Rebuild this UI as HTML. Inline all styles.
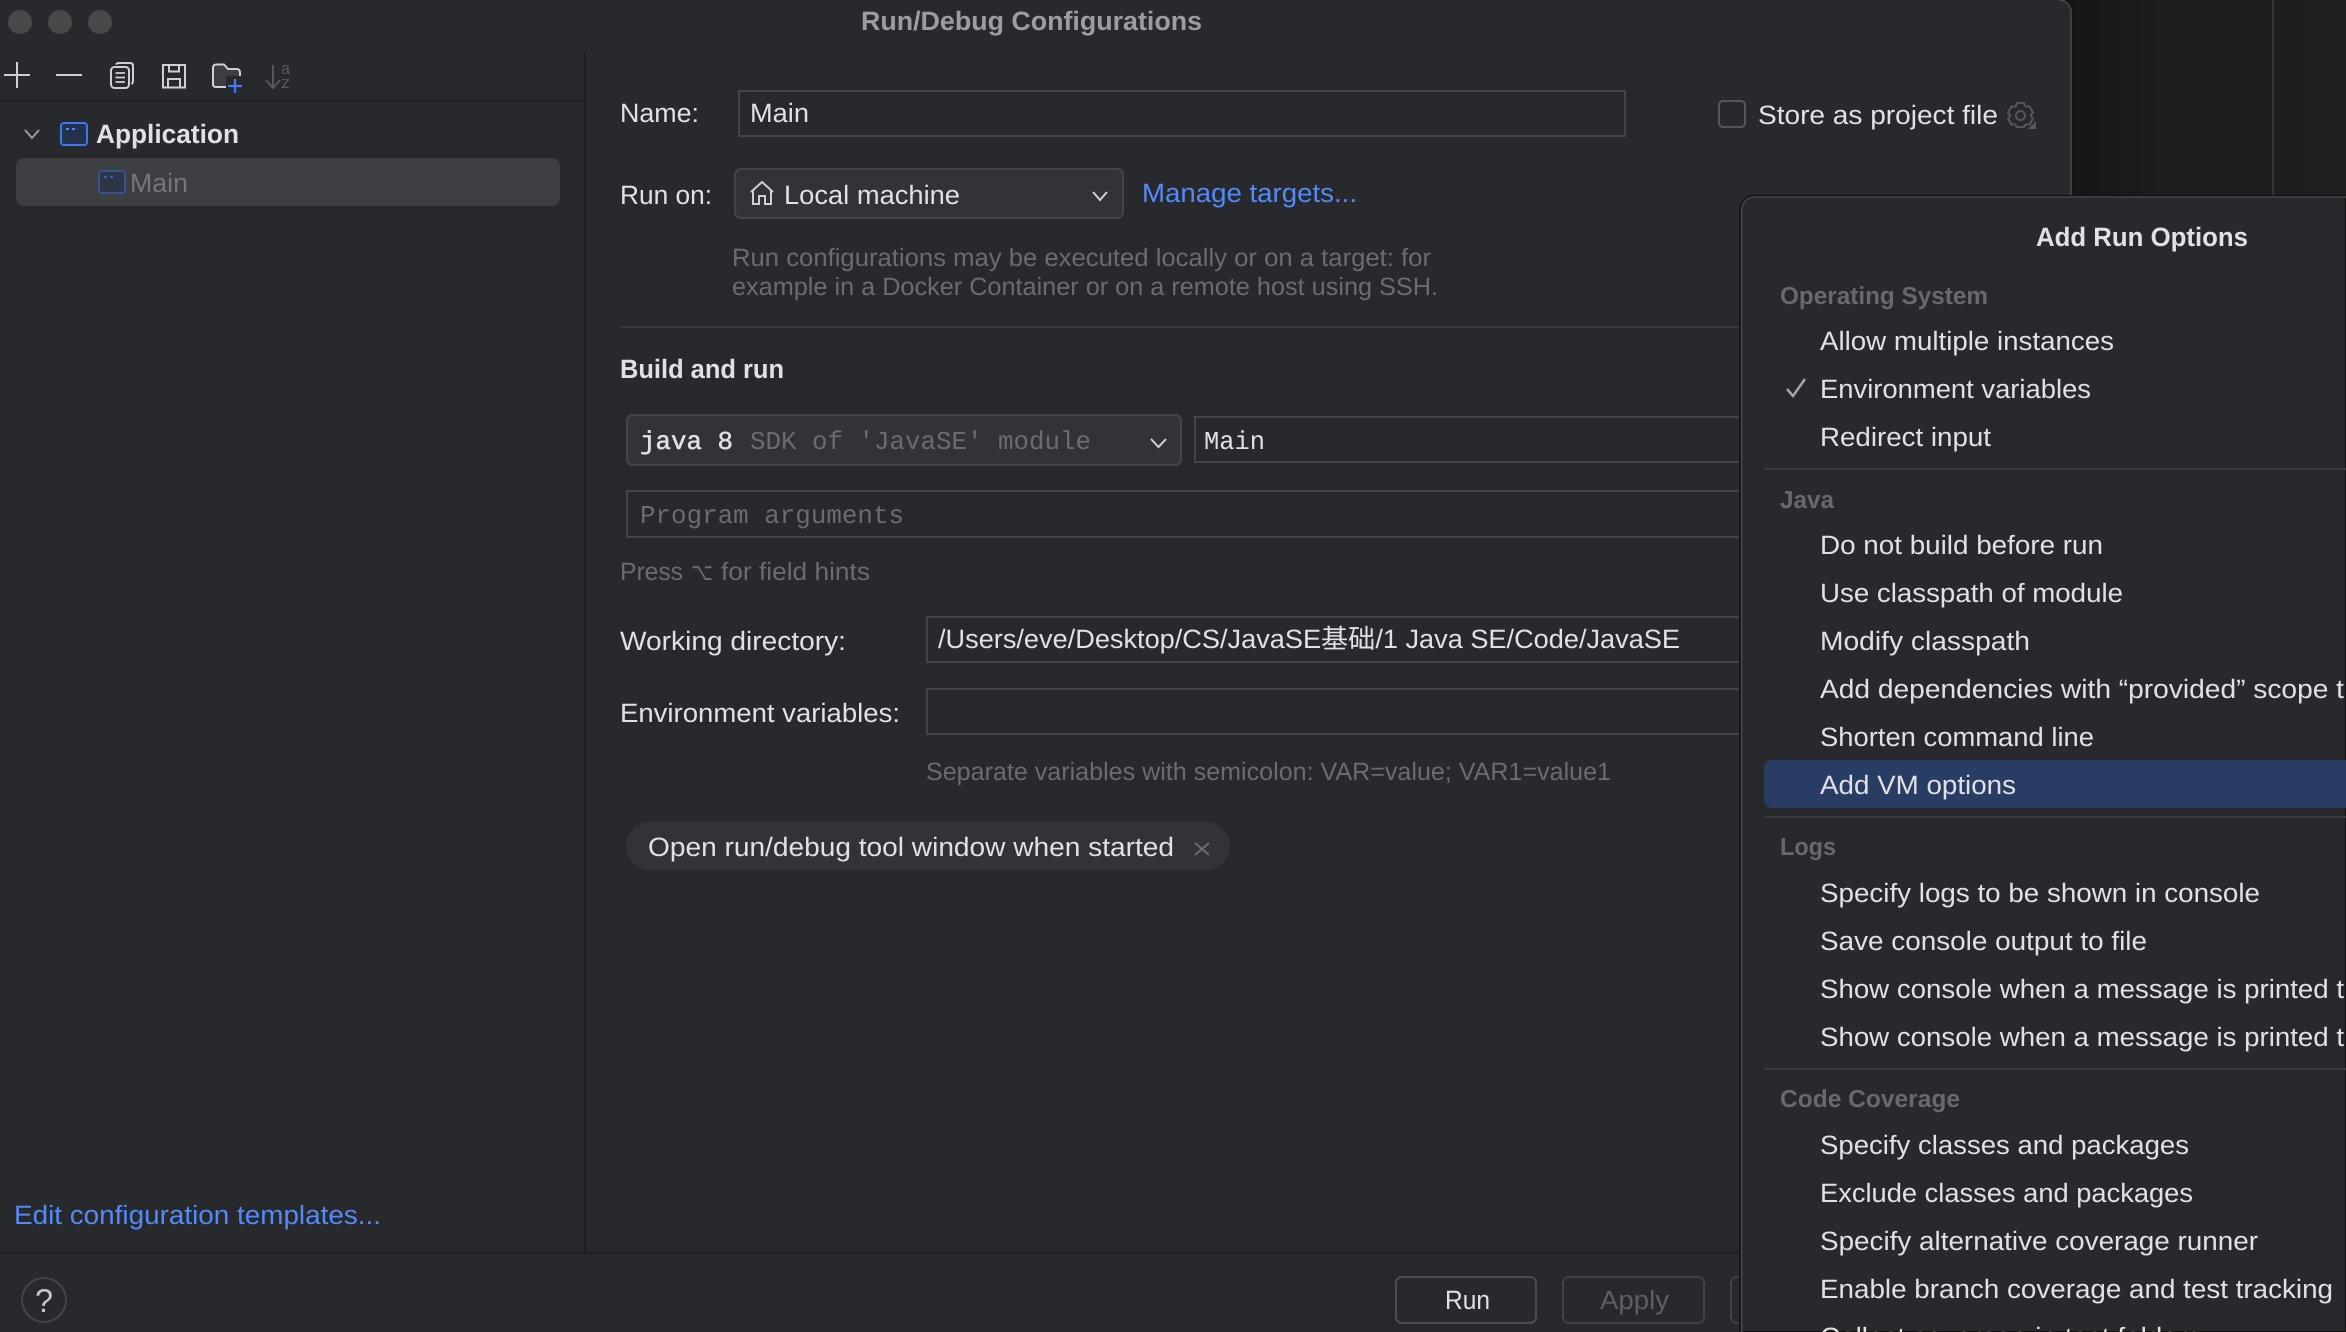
<!DOCTYPE html>
<html lang="en"><head><meta charset="utf-8"><title>Run/Debug Configurations</title>
<style>
html,body{margin:0;padding:0;background:#1d1e20;width:2346px;height:1332px;overflow:hidden}
svg{display:block}
text{font-family:"Liberation Sans","Noto Sans CJK SC",sans-serif;font-size:26.5px;fill:#dfe1e5;text-rendering:geometricPrecision;white-space:pre}
.b{font-weight:700}
.h{fill:#696c73;font-size:25px}
.g{fill:#67696f;font-weight:700;font-size:24.5px}
.m{font-family:"Liberation Mono",monospace;font-size:25.8px}
.l{fill:#548af7}
.i{stroke:#ced0d6;stroke-width:2;fill:none}
</style></head><body>
<svg width="2346" height="1332" viewBox="0 0 2346 1332" xmlns="http://www.w3.org/2000/svg">
<defs>
<linearGradient id="s" x1="0" x2="1" y1="0" y2="0"><stop offset="0" stop-color="#131416"/><stop offset=".35" stop-color="#1c1d1f"/><stop offset="1" stop-color="#1e1f21"/></linearGradient>
<clipPath id="pc"><path d="M1741 1332V210a14 14 0 0 1 14-14H2346V1332Z"/></clipPath>
</defs>
<rect x="2060" width="286" height="1332" fill="url(#s)"/>
<rect x="2272" width="2" height="196" fill="#333436"/>
<!-- dialog -->
<path d="M0 0H2059a12 12 0 0 1 12 12V1332H0Z" fill="#28292c"/>
<path d="M2059 0a12 12 0 0 1 12 12V196" fill="none" stroke="#4a4b4e" stroke-width="1.500"/>
<circle cx="20" cy="22" r="12" fill="#47484a"/><circle cx="60" cy="22" r="12" fill="#47484a"/><circle cx="100" cy="22" r="12" fill="#47484a"/>
<text x="861" y="30" class="b" style="fill:#9c9da0" textLength="341" lengthAdjust="spacingAndGlyphs">Run/Debug Configurations</text>

<!-- sidebar dividers -->
<rect x="584" y="52" width="2" height="1200" fill="#1f2022"/>
<rect x="0" y="100" width="584" height="2" fill="#1f2022"/>
<rect x="0" y="1252" width="1741" height="2" fill="#1f2022"/>

<!-- toolbar icons -->
<path class="i" d="M4 75H30M17 62V88"/>
<path class="i" d="M56 75H82"/>
<g class="i"><rect x="111" y="67" width="18" height="21" rx="3.500"/><path d="M116 64.500q1-1.500 3-1.500h11q3 0 3 3v15q0 2-1.500 3"/><path d="M115.500 73H125M115.500 77.500H125M115.500 82H125" stroke-width="1.800"/></g>
<g class="i"><path d="M163 65H185V87.500H163Z"/><path d="M169 65V71.500H179V65M168 87.500V79H180V87.500"/></g>
<path d="M213 84V68q0-3.500 3.500-3.500H224l4 4.500h8.500q3.500 0 3.500 3.500V84q0 3-3 3H216q-3 0-3-3Z" fill="#3c3e42" stroke="#ced0d6" stroke-width="2"/>
<rect x="226" y="76" width="18" height="18" fill="#28292c"/>
<path d="M235 79V93M228 86H242" stroke="#3c7cf2" stroke-width="2.200" fill="none"/>
<path d="M273 65V87M266 80L273 88L280 80" stroke="#55575c" stroke-width="2" fill="none"/>
<text x="281" y="74" style="fill:#55575c;font-size:17px" textLength="9" lengthAdjust="spacingAndGlyphs">a</text>
<text x="281" y="88" style="fill:#55575c;font-size:17px" textLength="9" lengthAdjust="spacingAndGlyphs">z</text>

<!-- tree -->
<path d="M25 130L32 138L39 130" stroke="#9a9ca2" stroke-width="2" fill="none"/>
<rect x="61" y="123" width="26" height="22" rx="3" fill="#25324d" stroke="#3f78ea" stroke-width="2"/>
<path d="M66 129H69M72 129H75" stroke="#548af7" stroke-width="2"/>
<text x="96" y="143" class="b" textLength="143" lengthAdjust="spacingAndGlyphs">Application</text>
<rect x="16" y="158" width="544" height="48" rx="8" fill="#3c3e42"/>
<rect x="99" y="171" width="26" height="22" rx="3" fill="#2c3445" stroke="#35538f" stroke-width="2"/>
<path d="M104 177H107M110 177H113" stroke="#3e5f9f" stroke-width="2"/>
<text x="130" y="192" style="fill:#74767b" textLength="58" lengthAdjust="spacingAndGlyphs">Main</text>

<text x="14" y="1224" class="l" textLength="367" lengthAdjust="spacingAndGlyphs">Edit configuration templates...</text>
<circle cx="44" cy="1300" r="22" fill="none" stroke="#43454a" stroke-width="2"/>
<text x="35" y="1312" style="font-size:33px;fill:#c4c6cb" textLength="18" lengthAdjust="spacingAndGlyphs">?</text>

<!-- form top -->
<text x="620" y="122" textLength="79" lengthAdjust="spacingAndGlyphs">Name:</text>
<rect x="739" y="91" width="886" height="45" fill="none" stroke="#43454a" stroke-width="2"/>
<text x="750" y="122" textLength="59" lengthAdjust="spacingAndGlyphs">Main</text>
<rect x="1719" y="101" width="26" height="26" rx="4" fill="none" stroke="#55575c" stroke-width="2"/>
<text x="1758" y="124" textLength="240" lengthAdjust="spacingAndGlyphs">Store as project file</text>
<g fill="none" stroke="#55575c" stroke-width="2">
<path d="M2017 103h7l1.500 3.500 4 0 3.500 6-2.500 3 2.500 3-3.500 6h-4l-1.500 2.500h-7l-1.500-2.500h-4l-3.500-6 2.500-3-2.500-3 3.500-6h4Z"/>
<circle cx="2020.500" cy="115.500" r="4.500"/></g>
<path d="M2028 129L2036 121V129Z" fill="#55575c"/>

<text x="620" y="204" textLength="92" lengthAdjust="spacingAndGlyphs">Run on:</text>
<rect x="735" y="169" width="388" height="49" rx="6" fill="#313337" stroke="#43454a" stroke-width="2"/>
<path d="M751 192L762 182L773 192M753 190V204H759V196H765V204H771V190" fill="none" stroke="#ced0d6" stroke-width="2"/>
<text x="784" y="204" textLength="176" lengthAdjust="spacingAndGlyphs">Local machine</text>
<path d="M1093 192L1100 200L1107 192" stroke="#ced0d6" stroke-width="2" fill="none"/>
<text x="1142" y="202" class="l" textLength="215" lengthAdjust="spacingAndGlyphs">Manage targets...</text>
<text x="732" y="266" class="h" textLength="699" lengthAdjust="spacingAndGlyphs">Run configurations may be executed locally or on a target: for</text>
<text x="732" y="295" class="h" textLength="706" lengthAdjust="spacingAndGlyphs">example in a Docker Container or on a remote host using SSH.</text>
<rect x="620" y="326" width="1121" height="2" fill="#37383b"/>

<!-- build and run -->
<text x="620" y="378" class="b" textLength="164" lengthAdjust="spacingAndGlyphs">Build and run</text>
<rect x="627" y="415" width="554" height="50" rx="6" fill="#313337" stroke="#43454a" stroke-width="2"/>
<text x="640" y="449" class="m" style="stroke:#dfe1e5;stroke-width:.5px" textLength="93" lengthAdjust="spacingAndGlyphs">java 8</text>
<text x="750" y="449" class="m" style="fill:#696c73" textLength="341" lengthAdjust="spacingAndGlyphs">SDK of 'JavaSE' module</text>
<path d="M1151 439L1158.500 447L1166 439" stroke="#ced0d6" stroke-width="2" fill="none"/>
<rect x="1195" y="417" width="600" height="45" fill="none" stroke="#43454a" stroke-width="2"/>
<text x="1204" y="449" class="m" textLength="61" lengthAdjust="spacingAndGlyphs">Main</text>
<rect x="627" y="491" width="1200" height="46" fill="none" stroke="#43454a" stroke-width="2"/>
<text x="640" y="523" class="m" style="fill:#696c73" textLength="264" lengthAdjust="spacingAndGlyphs">Program arguments</text>
<text x="620" y="580" class="h" textLength="63" lengthAdjust="spacingAndGlyphs">Press</text>
<text x="691" y="580" style="font-family:'DejaVu Sans',sans-serif;fill:#696c73;font-size:24px" textLength="22" lengthAdjust="spacingAndGlyphs">⌥</text>
<text x="721" y="580" class="h" textLength="149" lengthAdjust="spacingAndGlyphs">for field hints</text>

<text x="620" y="650" textLength="226" lengthAdjust="spacingAndGlyphs">Working directory:</text>
<rect x="927" y="617" width="900" height="45" fill="none" stroke="#43454a" stroke-width="2"/>
<text x="938" y="648" textLength="742" lengthAdjust="spacingAndGlyphs">/Users/eve/Desktop/CS/JavaSE基础/1 Java SE/Code/JavaSE</text>
<text x="620" y="722" textLength="280" lengthAdjust="spacingAndGlyphs">Environment variables:</text>
<rect x="927" y="689" width="900" height="45" fill="none" stroke="#43454a" stroke-width="2"/>
<text x="926" y="780" class="h" textLength="685" lengthAdjust="spacingAndGlyphs">Separate variables with semicolon: VAR=value; VAR1=value1</text>

<rect x="626" y="822" width="604" height="48" rx="24" fill="#313337"/>
<text x="648" y="856" textLength="526" lengthAdjust="spacingAndGlyphs">Open run/debug tool window when started</text>
<path d="M1195 843L1209 855M1209 843L1195 855" stroke="#696c73" stroke-width="2" fill="none"/>

<!-- buttons -->
<rect x="1396" y="1277" width="140" height="46" rx="6" fill="none" stroke="#4b4d52" stroke-width="2"/>
<text x="1445" y="1309" textLength="45" lengthAdjust="spacingAndGlyphs">Run</text>
<rect x="1563" y="1277" width="141" height="46" rx="6" fill="none" stroke="#3f4145" stroke-width="2"/>
<text x="1600" y="1309" style="fill:#5d5f65" textLength="69" lengthAdjust="spacingAndGlyphs">Apply</text>
<rect x="1731" y="1277" width="141" height="46" rx="6" fill="none" stroke="#3f4145" stroke-width="2"/>

<!-- popup -->
<path d="M1740 1332V210a14 14 0 0 1 14-14H2346V1332Z" fill="#28292c" stroke="#111214" stroke-width="2"/>
<path d="M1741.500 1332V210a13 13 0 0 1 13-13H2346" fill="none" stroke="#46474a" stroke-width="1.500"/>
<g clip-path="url(#pc)">
<text x="2036" y="246" class="b" textLength="212" lengthAdjust="spacingAndGlyphs">Add Run Options</text>

<text x="1780" y="304" class="g" textLength="208" lengthAdjust="spacingAndGlyphs">Operating System</text>
<text x="1820" y="350" textLength="294" lengthAdjust="spacingAndGlyphs">Allow multiple instances</text>
<path d="M1787 389L1793 396L1805 379" stroke="#a4a6ab" stroke-width="2.500" fill="none"/>
<text x="1820" y="398" textLength="271" lengthAdjust="spacingAndGlyphs">Environment variables</text>
<text x="1820" y="446" textLength="171" lengthAdjust="spacingAndGlyphs">Redirect input</text>
<rect x="1764" y="468" width="582" height="2" fill="#37383b"/>

<text x="1780" y="508" class="g" textLength="54" lengthAdjust="spacingAndGlyphs">Java</text>
<text x="1820" y="554" textLength="283" lengthAdjust="spacingAndGlyphs">Do not build before run</text>
<text x="1820" y="602" textLength="303" lengthAdjust="spacingAndGlyphs">Use classpath of module</text>
<text x="1820" y="650" textLength="210" lengthAdjust="spacingAndGlyphs">Modify classpath</text>
<text x="1820" y="698" textLength="524" lengthAdjust="spacingAndGlyphs">Add dependencies with “provided” scope t</text>
<text x="1820" y="746" textLength="274" lengthAdjust="spacingAndGlyphs">Shorten command line</text>
<rect x="1764" y="760" width="600" height="48" rx="8" fill="#283c64"/>
<text x="1820" y="794" textLength="196" lengthAdjust="spacingAndGlyphs">Add VM options</text>
<rect x="1764" y="816" width="582" height="2" fill="#37383b"/>

<text x="1780" y="855" class="g" textLength="56" lengthAdjust="spacingAndGlyphs">Logs</text>
<text x="1820" y="902" textLength="440" lengthAdjust="spacingAndGlyphs">Specify logs to be shown in console</text>
<text x="1820" y="950" textLength="327" lengthAdjust="spacingAndGlyphs">Save console output to file</text>
<text x="1820" y="998" textLength="524" lengthAdjust="spacingAndGlyphs">Show console when a message is printed t</text>
<text x="1820" y="1046" textLength="524" lengthAdjust="spacingAndGlyphs">Show console when a message is printed t</text>
<rect x="1764" y="1068" width="582" height="2" fill="#37383b"/>

<text x="1780" y="1107" class="g" textLength="180" lengthAdjust="spacingAndGlyphs">Code Coverage</text>
<text x="1820" y="1154" textLength="369" lengthAdjust="spacingAndGlyphs">Specify classes and packages</text>
<text x="1820" y="1202" textLength="373" lengthAdjust="spacingAndGlyphs">Exclude classes and packages</text>
<text x="1820" y="1250" textLength="438" lengthAdjust="spacingAndGlyphs">Specify alternative coverage runner</text>
<text x="1820" y="1298" textLength="513" lengthAdjust="spacingAndGlyphs">Enable branch coverage and test tracking</text>
<text x="1820" y="1346" textLength="381" lengthAdjust="spacingAndGlyphs">Collect coverage in test folders</text>
</g>
</svg>
</body></html>
